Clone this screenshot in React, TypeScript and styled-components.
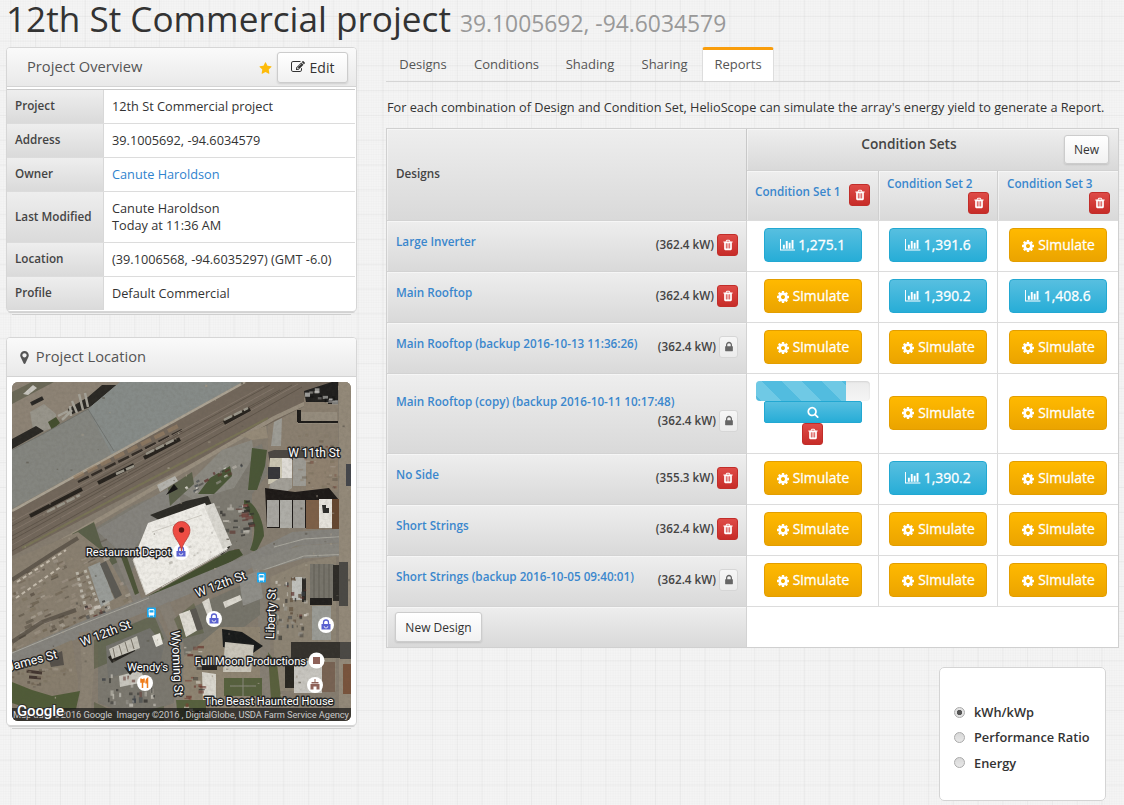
import React, { useState } from 'react';
import styled, { createGlobalStyle, css } from 'styled-components';

const GlobalStyle = createGlobalStyle`
  * { box-sizing: border-box; }
  body {
    margin: 0;
    height: 805px;
    overflow: hidden;
    color: #333;
    font-family: "Open Sans", "Liberation Sans", sans-serif;
    font-size: 13px;
    background-color: #f4f4f4;
    background-image:
      linear-gradient(to right, rgba(0,0,0,.035) 1px, transparent 1px),
      linear-gradient(to bottom, rgba(0,0,0,.035) 1px, transparent 1px),
      linear-gradient(to right, rgba(0,0,0,.01) 1px, transparent 1px),
      linear-gradient(to bottom, rgba(0,0,0,.01) 1px, transparent 1px);
    background-size: 24.8px 24.8px, 24.8px 24.8px, 2.48px 2.48px, 2.48px 2.48px;
    background-position: 10.4px 0, 0 15.8px, 10.4px 0, 0 15.8px;
  }
  button { font-family: inherit; cursor: pointer; }
`;

/* ---------- icons ---------- */

const ICONS = {
  chart: 'M640 768v512h-256v-512h256zm384-512v1024h-256v-1024h256zm1024 1152v128h-2048v-1536h128v1408h1920zm-640-896v768h-256v-768h256zm384-384v1152h-256v-1152h256z',
  cog: 'M1152 896q0-106-75-181t-181-75-181 75-75 181 75 181 181 75 181-75 75-181zm512-109v222q0 12-8 23t-20 13l-185 28q-19 54-39 91 35 50 107 138 10 12 10 25t-9 23q-27 37-99 108t-94 71q-12 0-26-9l-138-108q-44 23-91 38-16 136-29 186-7 28-36 28h-222q-14 0-24.500-8.500t-11.500-21.500l-28-184q-49-16-90-37l-141 107q-10 9-25 9-14 0-25-11-126-114-165-168-7-10-7-23 0-12 8-23 15-21 51-66.500t54-70.500q-27-50-41-99l-183-27q-13-2-21-12.500t-8-23.500v-222q0-12 8-23t19-13l186-28q14-46 39-92-40-57-107-138-10-12-10-24 0-10 9-23 26-36 98.500-107.500t94.500-71.500q13 0 26 10l138 107q44-23 91-38 16-136 29-186 7-28 36-28h222q14 0 24.500 8.500t11.500 21.500l28 184q49 16 90 37l142-107q9-9 24-9 13 0 25 10 129 119 165 170 7 8 7 22 0 12-8 23-15 21-51 66.500t-54 70.500q26 50 41 98l183 28q13 2 21 12.500t8 23.500z',
  edit: 'M888 1184l116-116-152-152-116 116v56h96v96h56zm440-720q-16-16-33 1l-350 350q-17 17-1 33t33-1l350-350q17-17 1-33zm80 594v190q0 119-84.500 203.500t-203.500 84.500h-832q-119 0-203.500-84.500t-84.500-203.500v-832q0-119 84.500-203.500t203.500-84.500h832q63 0 117 25 15 7 18 23 3 17-9 29l-49 49q-14 14-32 8-23-6-45-6h-832q-66 0-113 47t-47 113v832q0 66 47 113t113 47h832q66 0 113-47t47-113v-126q0-13 9-22l64-64q15-15 35-7t20 29zm-96-738l288 288-672 672h-288v-288zm444 132l-92 92-288-288 92-92q28-28 68-28t68 28l152 152q28 28 28 68t-28 68z',
  star: 'M1728 647q0 22-26 48l-363 354 86 500q1 7 1 20 0 21-10.500 35.500t-30.500 14.500q-19 0-40-12l-449-236-449 236q-22 12-40 12-21 0-31.500-14.500t-10.500-35.500q0-6 2-20l86-500-364-354q-25-27-25-48 0-37 56-46l502-73 225-455q19-41 49-41t49 41l225 455 502 73q56 9 56 46z',
  marker: 'M1152 640q0-106-75-181t-181-75-181 75-75 181 75 181 181 75 181-75 75-181zm256 0q0 109-33 179l-364 774q-16 33-47.500 52t-67.500 19-67.500-19-46.500-52l-365-774q-33-70-33-179 0-212 150-362t362-150 362 150 150 362z',
  trash: 'M704 1376v-704q0-14-9-23t-23-9h-64q-14 0-23 9t-9 23v704q0 14 9 23t23 9h64q14 0 23-9t9-23zm256 0v-704q0-14-9-23t-23-9h-64q-14 0-23 9t-9 23v704q0 14 9 23t23 9h64q14 0 23-9t9-23zm256 0v-704q0-14-9-23t-23-9h-64q-14 0-23 9t-9 23v704q0 14 9 23t23 9h64q14 0 23-9t9-23zm-544-992h448l-48-117q-7-9-17-11h-317q-10 2-17 11zm928 32v64q0 14-9 23t-23 9h-96v948q0 83-47 143.500t-113 60.500h-832q-66 0-113-58.500t-47-141.500v-952h-96q-14 0-23-9t-9-23v-64q0-14 9-23t23-9h309l70-167q15-37 54-63t79-26h320q40 0 79 26t54 63l70 167h309q14 0 23 9t9 23z',
  lock: 'M640 768h512v-192q0-106-75-181t-181-75-181 75-75 181v192zm832 96v576q0 40-28 68t-68 28h-960q-40 0-68-28t-28-68v-576q0-40 28-68t68-28h32v-192q0-184 132-316t316-132 316 132 132 316v192h32q40 0 68 28t28 68z',
  search: 'M1216 832q0-185-131.500-316.500t-316.500-131.500-316.500 131.500-131.500 316.500 131.500 316.500 316.500 131.500 316.500-131.500 131.500-316.500zm512 832q0 52-38 90t-90 38q-54 0-90-38l-343-342q-179 124-399 124-143 0-273.500-55.500t-225-150-150-225-55.500-273.500 55.500-273.500 150-225 225-150 273.500-55.500 273.500 55.500 225 150 150 225 55.500 273.500q0 220-124 399l343 343q37 37 37 90z',
};
type IconName = keyof typeof ICONS;

const Glyph = styled.svg<{ $size: number; $wide?: boolean }>`
  display: block;
  flex: none;
  height: ${p => p.$size}px;
  width: ${p => (p.$wide ? (p.$size * 2048) / 1792 : p.$size)}px;
  fill: currentColor;
`;
const Icon = ({ name, size }: { name: IconName; size: number }) => (
  <Glyph $size={size} $wide={name === 'chart'} viewBox={name === 'chart' ? '0 0 2048 1792' : '0 0 1792 1792'}>
    <path d={ICONS[name]} />
  </Glyph>
);

/* ---------- page frame ---------- */

const Page = styled.div`
  width: 1124px;
  height: 805px;
  overflow: hidden;
  padding-left: 6px;
`;
const Title = styled.h1`
  margin: 0;
  height: 47px;
  font-size: 35.15px;
  line-height: 36px;
  font-weight: 400;
  color: #333;
  white-space: nowrap;
`;
const Coordinates = styled.small`
  margin-left: 9px;
  font-size: 22.85px;
  color: #999;
`;
const Columns = styled.div`
  display: flex;
  gap: 29px;
  align-items: flex-start;
`;
const Sidebar = styled.aside`
  width: 351px;
  flex: none;
  display: flex;
  flex-direction: column;
  gap: 25px;
`;
const Main = styled.main`
  width: 734px;
  display: flex;
  flex-direction: column;
`;

/* ---------- buttons ---------- */

const LightButton = styled.button<{ $w: number; $h: number; $fs: number }>`
  display: flex;
  align-items: center;
  justify-content: center;
  gap: 5px;
  width: ${p => p.$w}px;
  height: ${p => p.$h}px;
  padding: 0;
  font-size: ${p => p.$fs}px;
  color: #333;
  border: 1px solid #ccc;
  border-radius: 3px;
  background: linear-gradient(#fff, #f1f1f1);
  box-shadow: 0 1px 2px rgba(0,0,0,.12);
`;
const DeleteButton = styled.button`
  display: flex;
  align-items: center;
  justify-content: center;
  flex: none;
  width: 21px;
  height: 22px;
  padding: 0;
  color: #fff;
  border: 1px solid #c12e2a;
  border-radius: 3px;
  background: linear-gradient(#de4b47, #c72c28);
`;
const LockButton = styled(DeleteButton)`
  width: 19px;
  color: #666;
  border-color: #d6d6d6;
  background: linear-gradient(#f6f6f6, #ebebeb);
`;
const ActionButton = styled.button<{ $kind: 'result' | 'simulate'; $slim?: boolean }>`
  display: flex;
  align-items: center;
  justify-content: center;
  gap: 3px;
  width: 98px;
  height: ${p => (p.$slim ? 22 : 34)}px;
  padding: 0 0 1px;
  color: #fff;
  font-size: 13.9px;
  -webkit-text-stroke: .3px #fff;
  border-radius: ${p => (p.$slim ? 2 : 4)}px;
  ${p => p.$kind === 'result'
    ? css`border: 1px solid #22a8d2; background: linear-gradient(#57bfe0, #27add7);`
    : css`border: 1px solid #e39e00; background: linear-gradient(#ffb900, #eba400);`}
  & > svg { margin-top: ${p => (p.$slim ? 1 : 2)}px; }
`;

/* ---------- sidebar ---------- */

const Panel = styled.section`
  border: 1px solid #d6d6d6;
  border-width: 1px 1.5px;
  border-radius: 4px;
  background: #fff;
  box-shadow: 0 3px 0 -2px #d2d2d2, 0 8px 0 -6px #efefef, 0 9px 0 -6px #cfcfcf;
`;
const PanelHeader = styled.header<{ $indent: number }>`
  display: flex;
  align-items: center;
  height: 39px;
  padding: 0 8px 0 ${p => p.$indent}px;
  border-bottom: 1px solid #d3d3d3;
  border-radius: 3px 3px 0 0;
  background: linear-gradient(#fafafa, #e9e9e9);
  color: #555;
  font-size: 14.7px;
`;
const HeaderTitle = styled.span`
  flex: 1;
  padding-bottom: 3px;
`;
const Favourite = styled.span`
  color: #fdbb0a;
  margin-right: 5px;
  padding-top: 2px;
`;
const Facts = styled.dl`
  margin: 2px 0 1px;
  border-top: 1px solid #c9c9c9;
  margin-right: 1px;
`;
const Fact = styled.div<{ $h: number }>`
  display: flex;
  height: ${p => p.$h}px;
  border-bottom: 1px solid #dcdcdc;
  &:last-child { border-bottom: 0; }
`;
const FactName = styled.dt`
  width: 97px;
  padding: 0 8px 3px;
  display: flex;
  align-items: center;
  font-size: 11.7px;
  font-weight: 600;
  color: #444;
  border-right: 1px solid #d8d8d8;
  background: linear-gradient(#eee, #dadada);
`;
const FactValue = styled.dd<{ $link?: boolean }>`
  margin: 0;
  padding-left: 8px;
  display: flex;
  align-items: center;
  white-space: pre-line;
  font-size: 12.72px;
  line-height: 17px;
  color: ${p => (p.$link ? '#2f83ce' : '#333')};
`;
const MapFrame = styled.div`
  padding: 5px 5px 4px 4.5px;
`;
const MapSvg = styled.svg`
  display: block;
  width: 339px;
  height: 339px;
  border-radius: 6px;
  font-family: Roboto, sans-serif;
`;

/* ---------- tabs ---------- */

const Tabs = styled.nav`
  display: flex;
  height: 35px;
  border-bottom: 1px solid #d5d5d5;
`;
const Tab = styled.a<{ $active?: boolean; $w: number }>`
  width: ${p => p.$w}px;
  height: 34px;
  display: flex;
  align-items: center;
  justify-content: center;
  font-size: 13px;
  color: #555;
  ${p => p.$active && css`
    padding-bottom: 3px;
    background: #fff;
    border: 1px solid #ddd;
    border-top: 3px solid #f99d0b;
    border-bottom: 0;
    border-radius: 3px 3px 0 0;
  `}
`;
const Intro = styled.p`
  margin: 0;
  height: 46px;
  padding: 16px 0 0 1px;
  font-size: 12.72px;
  line-height: 18px;
  white-space: nowrap;
`;

/* ---------- report matrix ---------- */

const Matrix = styled.div`
  width: 733px;
  height: 520px;
  display: grid;
  grid-template-columns: 360px 132px 119px 120px;
  grid-template-rows: 91px 51px 51px 51px 80px 51px 51px 51px 41px;
  border: 1px solid #d0d0d0;
  background: #fff;
`;
const shade = css`
  background: linear-gradient(#eee, #d9d9d9);
  box-shadow: inset 1px 1px 0 rgba(255,255,255,.45);
`;
const CornerCell = styled.div`
  ${shade}
  display: flex;
  align-items: center;
  padding: 0 9px 3px;
  font-size: 11.7px;
  font-weight: 600;
  color: #444;
  border-right: 1px solid #c8c8c8;
`;
const ConditionArea = styled.div`
  grid-column: 2 / 5;
  display: grid;
  grid-template-rows: 42px 49px;
`;
const ConditionTop = styled.div`
  ${shade}
  display: flex;
  padding: 6px 9px 0 7px;
  border-bottom: 1px solid #d2d2d2;
`;
const ConditionHeading = styled.span`
  flex: 1;
  text-align: center;
  font-size: 13.7px;
  line-height: 18px;
  font-weight: 600;
  color: #444;
`;
const ConditionRow = styled.div`
  display: grid;
  grid-template-columns: 132px 119px 120px;
`;
const ConditionCell = styled.div<{ $stacked?: boolean }>`
  ${shade}
  display: flex;
  flex-direction: ${p => (p.$stacked ? 'column' : 'row')};
  justify-content: space-between;
  align-items: ${p => (p.$stacked ? 'stretch' : 'center')};
  padding: ${p => (p.$stacked ? '4px 8px 6px 8px' : '0 8px 2px 8px')};
  border-right: 1px solid #cfcfcf;
  &:last-child { border-right: 0; padding: 4px 8px 6px 9px; }
  & > button { align-self: ${p => (p.$stacked ? 'flex-end' : 'center')}; }
`;
const Link = styled.a`
  color: #3a87cd;
  font-size: 11.7px;
  line-height: 16px;
  font-weight: 600;
  white-space: nowrap;
`;
const LiftedLink = styled(Link)`
  padding-bottom: 7px;
`;
const DesignCell = styled.div<{ $stacked?: boolean }>`
  ${shade}
  display: flex;
  flex-direction: ${p => (p.$stacked ? 'column' : 'row')};
  justify-content: ${p => (p.$stacked ? 'center' : 'space-between')};
  padding: ${p => (p.$stacked ? '0 8px 3px 9px' : '12px 8px 0 9px')};
  border-right: 1px solid #d3d3d3;
  border-top: 1px solid #d3d3d3;
`;
const Capacity = styled.div<{ $ownLine?: boolean }>`
  display: flex;
  align-items: center;
  align-self: ${p => (p.$ownLine ? 'flex-end' : 'flex-start')};
  gap: 3px;
  height: 22px;
  margin-top: 1px;
  font-size: 11.7px;
  font-weight: 600;
  color: #444;
`;
const CapacityText = styled.span`
  padding-bottom: 2px;
`;
const ResultCell = styled.div`
  display: flex;
  flex-direction: column;
  align-items: center;
  justify-content: center;
  padding-bottom: 2px;
  border-top: 1px solid #dcdcdc;
  border-right: 1.5px solid #dcdcdc;
  &:nth-child(4n + 2) { border-right: 0; }
`;
const ProgressTrack = styled.div`
  width: 114px;
  height: 20px;
  border-radius: 4px;
  overflow: hidden;
  background: linear-gradient(#ebebeb, #f5f5f5);
  box-shadow: inset 0 1px 2px rgba(0,0,0,.1);
`;
const ProgressFill = styled.div`
  width: 90px;
  height: 100%;
  background: linear-gradient(45deg, #6fc9e5 25%, #52bcdf 25%, #52bcdf 50%, #6fc9e5 50%, #6fc9e5 75%, #52bcdf 75%) 26px 0 / 40px 40px;
`;
const NewDesignCell = styled.div`
  ${shade}
  padding: 5px 8px;
  border-right: 1px solid #d3d3d3;
  border-top: 1px solid #d3d3d3;
`;
const FooterCell = styled.div`
  grid-column: 2 / 5;
  border-top: 1px solid #dcdcdc;
`;

/* ---------- metric chooser ---------- */

const Metrics = styled.fieldset`
  align-self: flex-end;
  display: flex;
  flex-direction: column;
  gap: 7.4px;
  width: 167px;
  height: 134px;
  margin: 19px 14px 0 0;
  padding: 35px 0 0 14px;
  border: 1.5px solid #d4d4d4;
  border-radius: 5px;
  background: #fff;
`;
const Metric = styled.label`
  display: flex;
  align-items: center;
  gap: 9px;
  height: 18px;
  font-size: 12.8px;
  font-weight: 600;
`;
const Radio = styled.input`
  appearance: none;
  width: 11px;
  height: 11px;
  margin: 0;
  border: 1px solid #aaa;
  border-radius: 50%;
  background: linear-gradient(#d8d8d8, #e8e8e8);
  &:checked { background: radial-gradient(circle, #555 0 2.3px, #e2e2e2 3px); }
`;

/* ---------- satellite map ---------- */

const makeRandom = (seed: number) => () => {
  seed = (seed * 16807) % 2147483647;
  return seed / 2147483647;
};
type SpecksProps = { seed: number; n: number; x: number; y: number; w: number; h: number; angle?: number; colors: string[]; size?: [number, number] };
const Specks = ({ seed, n, x, y, w, h, angle = 0, colors, size = [4, 2] }: SpecksProps) => {
  const r = makeRandom(seed);
  return (
    <g transform={`translate(${x} ${y}) rotate(${angle})`}>
      {Array.from({ length: n }, (_, i) => (
        <rect key={i} x={r() * w} y={r() * h} width={size[0] * (0.4 + r())} height={size[1] * (0.5 + r())} fill={colors[Math.floor(r() * colors.length)]} opacity={0.4 + r() * 0.4} />
      ))}
    </g>
  );
};
const CARS = ['#e0ddd4', '#2f2e2c', '#5b2f2a', '#9a978f', '#3b4046', '#c8c4ba'];
const DIRT = ['#8d8271', '#6b604f', '#a2978a', '#5a5145', '#7f7462'];

const Label = ({ x, y, size = 12, rotate = 0, anchor = 'middle', children }: { x: number; y: number; size?: number; rotate?: number; anchor?: 'middle' | 'start' | 'end'; children: string }) => (
  <text transform={`translate(${x} ${y}) rotate(${rotate})`} fontSize={size} textAnchor={anchor} fill="#fff" stroke="#262626" strokeWidth="2.8" strokeLinejoin="round" paintOrder="stroke">{children}</text>
);
const Disc = ({ x, y, children }: { x: number; y: number; children: React.ReactNode }) => (
  <g transform={`translate(${x} ${y})`}><circle r="8" fill="#fff" />{children}</g>
);
const Bag = () => (
  <g><path d="M-4.500 -1h9v5.500h-9z" fill="#5a61cf" /><path d="M-2.500 -1v-1.500a2.500 2.500 0 0 1 5 0v1.500" fill="none" stroke="#5a61cf" strokeWidth="1.300" /><path d="M-1.800 1.200a1.800 1.800 0 0 0 3.600 0" fill="none" stroke="#fff" strokeWidth=".8" /></g>
);
const Bus = ({ x, y }: { x: number; y: number }) => (
  <g transform={`translate(${x} ${y})`}>
    <rect x="-4.500" y="-5" width="9" height="10" rx="1" fill="#1ba8f0" />
    <rect x="-2.800" y="-3.500" width="5.600" height="6.500" rx="1.200" fill="#fff" />
    <rect x="-2" y="-2.300" width="4" height="2.300" fill="#1ba8f0" />
    <path d="M-2 3v1M2 3v1" stroke="#fff" />
  </g>
);

const SatelliteMap = () => (
  <MapSvg viewBox="0 0 339 339">
    <defs>
      <filter id="grain" x="0" y="0" width="100%" height="100%">
        <feTurbulence type="fractalNoise" baseFrequency=".3" numOctaves="3" seed="8" />
        <feColorMatrix values="0 0 0 0 .1  0 0 0 0 .09  0 0 0 0 .07  0 0 0 -2 1.200" />
      </filter>
    </defs>
    <rect width="339" height="339" fill="#857c6f" />

    {/* north-west yard and warehouse roof */}
    <path d="M0 0h110L0 66z" fill="#8d8375" />
    <path d="M0 10L20 0h22L0 22z" fill="#6a6857" />
    <path d="M18 30l14-8 12 10v12l-22 10z" fill="#97948a" />
    <path d="M36 40l8-5 4 6-8 7z" fill="#444e2f" />
    <path d="M0 57l24-13 8 5-32 18zM56 27l20-12 14-12h18l-30 22-20 8z" fill="#2a2824" />
    <path d="M46 34l10-5M50 38l10-10M59 34l-1-10M65 31l-5-12M71 28l-4-16M76 25l-3-14" stroke="#a5a298" strokeWidth="2.500" />
    <path d="M19 22l12-6" stroke="#292724" strokeWidth="4" />
    <path d="M11 12l10-9 4 3-9 7z" fill="#c8c6bf" />
    <path d="M0 68L31 52 76 27 108 0h123l-63 35L0 127z" fill="#84857f" />
    <path d="M76 27L108 0h123l-63 35-68 38z" fill="#868b88" />
    <path d="M76 27l26 42M0 68l31-16 45-25" stroke="#6c6f6a" strokeWidth=".8" fill="none" />

    {/* railway */}
    <path d="M0 128L231 0h108L256 43 100 122 0 174z" fill="#72675b" />
    <path d="M0 129L233 0" stroke="#aaa293" strokeWidth="2.500" />
    <path d="M62 96L168 43" stroke="#9a8064" strokeWidth="4" strokeDasharray="11 4" opacity=".6" />
    <path d="M66 100L170 48" stroke="#332d27" strokeWidth="2.500" strokeDasharray="12 3" />
    <g fill="none" strokeWidth="1">
      <path d="M0 140L252 4M0 149L262 6M0 163L286 2" stroke="#82766a" />
      <path d="M0 144L258 3M0 154L268 8M0 158L280 3M0 169L290 5" stroke="#5f554a" />
    </g>
    <path d="M18 134l52-27M86 101l36-18M132 76l36-19M212 41l26-14" stroke="#27231e" strokeWidth="4" />
    <path d="M35 130l33-17M104 92l20-9M134 72l30-15M212 38l24-12" stroke="#9a968a" strokeWidth="2.500" strokeDasharray="9 2" />
    <path d="M18 177L121 118 262 36 339 0" stroke="#988e7e" strokeWidth="4" fill="none" />
    <path d="M10 166L120 107 256 36" stroke="#7d7b53" strokeWidth="2" fill="none" opacity=".6" />

    {/* lots around the depot */}
    <path d="M60 160l60-36 60-26 30-20 40-16 6 30-16 20v60l-30 14-20-46-60 22-14 40-20 10z" fill="#7d7a71" />
    <path d="M84 148l76-44 8 12 2 16-35 16-20 28z" fill="#85837d" />
    <path d="M168 110l42-42 30-10 2 16-20 32-40 12z" fill="#8b8981" />
    <path d="M186 112l12-16 20-12 2 10-18 18zM240 66l15 2-2 16-8 24-9 0zM232 118c10 0 20 20 20 36l-8 16-6-2c8-20 4-36-6-42z" fill="#4a5637" />
    <path d="M156 106l24-16 2 12-24 22zM60 152l22-12 8 24 20 14-16 8-20-14z" fill="#5a5f49" />
    <path d="M162 102l-8 11 12-6z" fill="#171615" />
    <path d="M145 103l18-9 3 5-18 11z" fill="#b4b3ad" />
    <Specks seed={31} n={24} x={204} y={120} w={30} h={54} colors={CARS} size={[5, 2.500]} />
    <Specks seed={7} n={16} x={224} y={118} w={10} h={38} angle={-8} colors={['#6d3833', '#ece8df', '#2a2927', '#59342f']} size={[6, 2.500]} />
    <Specks seed={77} n={26} x={172} y={104} w={60} h={12} angle={-28} colors={CARS} size={[4, 2]} />
    <path d="M138 133l36-14 22-5 22 51-8 8z" fill="#2c2b26" />
    <path d="M136 141l57-20 23 46-82 46-13-35z" fill="#eeece6" />
    <path d="M192 124l10-3 18 42-9 4z" fill="#d9d7d0" />
    <path d="M150 205l65-37M134 213l-13-35M140 150l50-17" stroke="#cfccc4" strokeWidth="1" />
    <Specks seed={5} n={14} x={138} y={158} w={66} h={34} angle={-18} colors={['#bbb8b0', '#fff', '#b4b1aa']} size={[3, 2]} />
    <path d="M129 218l88-49 10-2 4 6-50 28-48 24z" fill="#434e30" />

    {/* scrap yards to the west */}
    <path d="M0 178l66-28 28 22 30 54-46 20L0 282z" fill="#897f70" />
    <Specks seed={44} n={200} x={-30} y={210} w={130} h={74} angle={-24} colors={[...DIRT, '#aaa295', '#968b7c']} size={[6, 2.200]} />
    <path d="M0 198L40 172 66 156M0 260l30-20 34-12" stroke="#38312a" strokeWidth="4" fill="none" opacity=".5" />
    <path d="M5 200L54 168M4 216L50 184" stroke="#c5bcad" strokeWidth="2" strokeDasharray="4 3" />
    <path d="M76 185l12-5 14 37-13 8z" fill="#999c98" />
    <path d="M88 182l6-3 16 34-7 4z" fill="#5c5a54" />
    <path d="M65 190l9 38M73 188l12 32" stroke="#b9b4a8" strokeWidth="3" strokeDasharray="3 3" />
    <Specks seed={97} n={18} x={70} y={224} w={24} h={14} angle={-20} colors={CARS} size={[5, 4]} />
    <path d="M101 170l8-4 22 54-8 4z" fill="#858078" />
    <path d="M108 172l5-3 14 42-4 2z" fill="#4d5439" />

    {/* 12th Street and crossings */}
    <path d="M0 278L70 247 140 220 232 182 282 157 339 153" fill="none" stroke="#85837d" strokeWidth="14" />
    <path d="M240 185L290 170 339 167" fill="none" stroke="#88867f" strokeWidth="13" />
    <path d="M0 271l68-28 69-27M262 165l30-8 47-3M240 192l52-18 47-2" fill="none" stroke="#a9a79e" strokeWidth="1" />
    <path d="M73 250L76 285 72 339" fill="none" stroke="#8b8273" strokeWidth="12" />
    <path d="M152 222l9 20 6 34v63" fill="none" stroke="#867f74" strokeWidth="12" />
    <path d="M249 188l3 45 1 106" fill="none" stroke="#867f74" strokeWidth="12" />
    <path d="M333 0v339" stroke="#938979" strokeWidth="12" />

    {/* block between 12th Street and Wyoming */}
    <path d="M86 255l58-23 16 34 2 55-38 14-38-14z" fill="#7b786f" />
    <path d="M82 258l60-25 10 24-70 30zM82 320l30 14 40-10v15H82z" fill="#5d6149" opacity=".7" />
    <path d="M94 264l44-18 14 18-4 18-52 14z" fill="#74736d" />
    <path d="M96 275l27-15v9l-23 12z" fill="#25231f" />
    <path d="M97 267l28-13 3 12-28 11z" fill="#c8c5bb" />
    <path d="M101 266l2 10M107 263l3 10M113 260l3 10M119 257l3 10" stroke="#777267" />
    <path d="M140 254l8-3 3 11-7 3z" fill="#e9e7df" />
    <path d="M107 294l22-6 4 12-25 5z" fill="#c7c5bd" />
    <path d="M112 285l12 2-6 6z" fill="#25241f" />
    <Specks seed={9} n={32} x={90} y={290} w={60} h={34} colors={CARS} size={[3, 4]} />

    {/* south-west corner */}
    <path d="M0 284l60-26 6 40-2 41H0z" fill="#877d6d" />
    <path d="M0 300l20 8 20 6 28-5-4 18-34 4-30-10z" fill="#505b38" />
    <path d="M36 275l14-6 2 14-13 2z" fill="#55504a" />
    <path d="M14 289l16 2M17 295l12 1" stroke="#433630" strokeWidth="3" />
    <Specks seed={12} n={30} x={0} y={285} w={60} h={16} colors={DIRT} size={[5, 2]} />

    {/* south centre */}
    <path d="M170 230l58-26 20-6v35l-34 26-42 14z" fill="#76746a" />
    <path d="M162 237l20-16 10 30-22 6z" fill="#5b6045" opacity=".6" />
    <path d="M190 220l7-4 4 16-5 3zM211 220l17-7 2 5-17 8z" fill="#dbd8cf" />
    <path d="M227 197l20-9 4 28-20 8z" fill="#8f8e88" />
    <path d="M167 232l11-4 8 20-12 7z" fill="#dedbd2" />
    <path d="M178 228l6-2 7 21-6 2z" fill="#5a5751" />
    <path d="M172 275l36-30h40v90h-78z" fill="#8e8472" />
    <path d="M210 247l20 3 21 14-10 7-30-6z" fill="#191b1b" />
    <path d="M213 260l29 3-3 27h-28z" fill="#c9c5b9" />
    <path d="M190 290l14 2v30h-13z" fill="#d9d6cd" />
    <path d="M190 283h15v5h-15z" fill="#24211e" />
    <path d="M212 296h38v18h-38zM164 318h30v21h-28z" fill="#57613e" />
    <path d="M218 304h26M231 296v18" stroke="#8b8a7c" strokeWidth="1" />
    <Specks seed={22} n={32} x={172} y={262} w={16} h={70} colors={['#632f27', '#2d2c2a', '#c9c3b6', '#7a3d32']} size={[5, 2.500]} />

    {/* north-east blocks */}
    <path d="M256 43L292 25v-9L326 0v110h-70z" fill="#8a7f70" />
    <path d="M292 9L320 0h6v22h-10v-2h-22z" fill="#201f1e" />
    <path d="M286 30h39v12h-39z" fill="#958c7d" />
    <path d="M285 28h4v12h-4zM286 39h40v2h-40z" fill="#1d1b19" />
    <path d="M262 40l8-4-1 28h-10z" fill="#9d9c95" />
    <path d="M228 53l26-9 2 12-16 2z" fill="#958a78" />
    <path d="M256 70l6-2h30v10h-24l-10 4z" fill="#4b4742" />
    <path d="M258 76h12v26h-14z" fill="#cbc6b2" /><path d="M270 76h10v26h-10z" fill="#dedbd5" /><path d="M281 76h13v28h-13z" fill="#9d9b94" />
    <path d="M256 85h12v12h-12z" fill="#37373a" /><path d="M268 96h12v10l-6 4h-18l2-8z" fill="#a29f97" />
    <path d="M294 76h32v32h-32z" fill="#8f816f" />
    <Specks seed={66} n={48} x={286} y={46} w={38} h={60} colors={[...DIRT, '#775245']} size={[4, 2]} />
    <path d="M253 106l30 4 34-4 10 12-2 28h-70z" fill="#1e1a18" />
    <path d="M255 118h12v27h-12z" fill="#a7a5a0" /><path d="M268 118h12v28h-12z" fill="#aeada7" /><path d="M281 118h12v28h-12z" fill="#9e9c96" />
    <path d="M294 118h13v29h-13z" fill="#7d6048" /><path d="M307 117h13v29h-13z" fill="#e6e3dc" /><path d="M320 117h7v30h-7z" fill="#654730" />
    <path d="M310 123h4v3h3v5h-6z" fill="#2d2c2a" />
    <Specks seed={63} n={15} x={293} y={6} w={28} h={16} colors={['#aaa9a6', '#cccbc8', '#111']} size={[5, 3]} />
    <path d="M334 82h5v22h-5z" fill="#44464b" />

    {/* south-east blocks */}
    <path d="M258 195l36-15 30-6v135h-60z" fill="#8d8474" />
    <path d="M298 182h24v34h-24z" fill="#77746b" /><path d="M321 183h6v36h-6z" fill="#2e2c28" />
    <path d="M302 182v34M307 182v34M312 182v34M317 182v34" stroke="#635f56" />
    <path d="M280 195h10v23h-10z" fill="#bfc0bb" /><path d="M290 196h4v24h-4z" fill="#2c2a26" />
    <path d="M300 224h19v34h-19z" fill="#9a9b95" /><path d="M298 216h22v7h-22z" fill="#211f1d" />
    <path d="M279 260h58v16h-58z" fill="#35322d" /><path d="M273 276h12v30h-12z" fill="#292721" />
    <path d="M282 279h28v32h-28z" fill="#c7c5bf" />
    <path d="M310 280h13v30h-13z" fill="#786353" />
    <path d="M327 180h9v44h-9zM328 260h11v17h-11z" fill="#4b4945" />
    <path d="M331 282h8v30h-8z" fill="#79543d" />
    <path d="M256 270l9 12 4 34-10 2z" fill="#59603d" />
    <Specks seed={4} n={50} x={262} y={194} w={32} h={60} colors={[...CARS, '#5b4937']} size={[3, 3]} />

    <Specks seed={52} n={100} x={0} y={0} w={339} h={339} colors={['#5d594f', '#a39a89']} size={[2, 1.500]} />
    <rect width="339" height="339" filter="url(#grain)" opacity=".13" />

    <rect y="326" width="339" height="13" fill="#111" opacity=".68" />
    <text x="337" y="336" fontSize="9.300" fill="#c9c9c9" textAnchor="end" textLength="336" xmlSpace="preserve">Map data ©2016 Google&#160; Imagery ©2016 , DigitalGlobe, USDA Farm Service Agency</text>

    <Label x={302} y={75} size={12}>W 11th St</Label>
    <Label x={210} y={206} size={12.300} rotate={-21}>W 12th St</Label>
    <Label x={95} y={255} size={12.300} rotate={-21}>W 12th St</Label>
    <Label x={46} y={276} size={12.300} rotate={-15} anchor="end">James St</Label>
    <Label x={263} y={232} size={12} rotate={-88}>Liberty St</Label>
    <Label x={161} y={281.500} size={12.300} rotate={87}>Wyoming St</Label>
    <Label x={159} y={174} size={11} anchor="end">Restaurant Depot</Label>
    <Label x={135.500} y={289} size={11.300}>Wendy's</Label>
    <Label x={294} y={283} size={11.100} anchor="end">Full Moon Productions</Label>
    <Label x={257} y={323} size={11.100}>The Beast Haunted House</Label>

    <Disc x={169} y={170}><Bag /></Disc>
    <Disc x={202} y={237}><Bag /></Disc>
    <Disc x={314} y={243}><Bag /></Disc>
    <Disc x={133} y={301}>
      <path d="M-2.500 5V-4M-4 -4.500v3.500h3v-3.500M2.500 5V-4.500q-1.500 1-1.500 5" fill="none" stroke="#ef7d1a" strokeWidth="1.500" />
    </Disc>
    <Disc x={304.500} y={278.500}><rect x="-3.500" y="-3.500" width="7" height="7" fill="#8e6259" /></Disc>
    <Disc x={303} y={303}>
      <path d="M-4.500 4.500V-1h9v5.500h-3V1.500h-3v3zM-3.500 -3h7v1.500h-7zM-.5 -6h1v3h-1z" fill="#8e6259" />
    </Disc>
    <Bus x={139.500} y={230.500} />
    <Bus x={249.500} y={195.500} />

    <path d="M169.500 169c-.8-9-8.500-13-8.500-21a8.500 8.500 0 0 1 17 0c0 8-7.700 12-8.500 21z" fill="#ee4c43" stroke="#b83a35" strokeWidth=".8" />
    <circle cx="169.500" cy="148" r="2.700" fill="#5c1411" />

    <text x="5" y="334" fontSize="15" fontWeight="500" fill="#fff" stroke="#333" strokeWidth="2" paintOrder="stroke" textLength="47">Google</text>
  </MapSvg>
);

/* ---------- data ---------- */

const facts = [
  { name: 'Project', value: '12th St Commercial project', h: 34 },
  { name: 'Address', value: '39.1005692, -94.6034579', h: 34 },
  { name: 'Owner', value: 'Canute Haroldson', h: 34, link: true },
  { name: 'Last Modified', value: 'Canute Haroldson\nToday at 11:36 AM', h: 51 },
  { name: 'Location', value: '(39.1006568, -94.6035297) (GMT -6.0)', h: 34 },
  { name: 'Profile', value: 'Default Commercial', h: 33 },
];

const tabs: [string, number][] = [['Designs', 74], ['Conditions', 93], ['Shading', 74], ['Sharing', 75], ['Reports', 72]];

type Design = { name: string; kw: string; locked?: boolean; stacked?: boolean; cells: string[] };
const designs: Design[] = [
  { name: 'Large Inverter', kw: '362.4', cells: ['1,275.1', '1,391.6', ''] },
  { name: 'Main Rooftop', kw: '362.4', cells: ['', '1,390.2', '1,408.6'] },
  { name: 'Main Rooftop (backup 2016-10-13 11:36:26)', kw: '362.4', locked: true, cells: ['', '', ''] },
  { name: 'Main Rooftop (copy) (backup 2016-10-11 10:17:48)', kw: '362.4', locked: true, stacked: true, cells: ['running', '', ''] },
  { name: 'No Side', kw: '355.3', cells: ['', '1,390.2', ''] },
  { name: 'Short Strings', kw: '362.4', cells: ['', '', ''] },
  { name: 'Short Strings (backup 2016-10-05 09:40:01)', kw: '362.4', locked: true, cells: ['', '', ''] },
];

const Delete = () => <DeleteButton><Icon name="trash" size={12} /></DeleteButton>;

const Result = ({ value }: { value: string }) => {
  if (value === 'running') {
    return (
      <ResultCell>
        <ProgressTrack><ProgressFill /></ProgressTrack>
        <ActionButton $kind="result" $slim><Icon name="search" size={12} /></ActionButton>
        <Delete />
      </ResultCell>
    );
  }
  return (
    <ResultCell>
      <ActionButton $kind={value ? 'result' : 'simulate'}>
        <Icon name={value ? 'chart' : 'cog'} size={value ? 13.5 : 14} />
        {value || 'Simulate'}
      </ActionButton>
    </ResultCell>
  );
};

export default function App() {
  const [metric, setMetric] = useState('kWh/kWp');
  return (
    <Page>
      <GlobalStyle />
      <Title>12th St Commercial project<Coordinates>39.1005692, -94.6034579</Coordinates></Title>
      <Columns>
        <Sidebar>
          <Panel>
            <PanelHeader $indent={20}>
              <HeaderTitle>Project Overview</HeaderTitle>
              <Favourite><Icon name="star" size={13} /></Favourite>
              <LightButton $w={71} $h={31} $fs={14}><Icon name="edit" size={14} />Edit</LightButton>
            </PanelHeader>
            <Facts>
              {facts.map(f => (
                <Fact key={f.name} $h={f.h}>
                  <FactName>{f.name}</FactName>
                  <FactValue $link={f.link}>{f.value}</FactValue>
                </Fact>
              ))}
            </Facts>
          </Panel>
          <Panel>
            <PanelHeader $indent={10}>
              <Icon name="marker" size={15} />
              <HeaderTitle>&nbsp;Project Location</HeaderTitle>
            </PanelHeader>
            <MapFrame><SatelliteMap /></MapFrame>
          </Panel>
        </Sidebar>
        <Main>
          <Tabs>
            {tabs.map(([label, w]) => <Tab key={label} $w={w} $active={label === 'Reports'}>{label}</Tab>)}
          </Tabs>
          <Intro>For each combination of Design and Condition Set, HelioScope can simulate the array's energy yield to generate a Report.</Intro>
          <Matrix>
            <CornerCell>Designs</CornerCell>
            <ConditionArea>
              <ConditionTop>
                <ConditionHeading>Condition Sets</ConditionHeading>
                <LightButton $w={45} $h={29} $fs={12}>New</LightButton>
              </ConditionTop>
              <ConditionRow>
                {[1, 2, 3].map(n => (
                  <ConditionCell key={n} $stacked={n > 1}>
                    {n === 1 ? <LiftedLink>Condition Set 1</LiftedLink> : <Link>Condition Set {n}</Link>}
                    <Delete />
                  </ConditionCell>
                ))}
              </ConditionRow>
            </ConditionArea>
            {designs.map(d => (
              <React.Fragment key={d.name}>
                <DesignCell $stacked={d.stacked}>
                  <Link>{d.name}</Link>
                  <Capacity $ownLine={d.stacked}>
                    <CapacityText>({d.kw} kW)</CapacityText>
                    {d.locked ? <LockButton><Icon name="lock" size={12} /></LockButton> : <Delete />}
                  </Capacity>
                </DesignCell>
                {d.cells.map((c, i) => <Result key={i} value={c} />)}
              </React.Fragment>
            ))}
            <NewDesignCell><LightButton $w={87} $h={30} $fs={12}>New Design</LightButton></NewDesignCell>
            <FooterCell />
          </Matrix>
          <Metrics>
            {['kWh/kWp', 'Performance Ratio', 'Energy'].map(m => (
              <Metric key={m}>
                <Radio type="radio" name="metric" checked={metric === m} onChange={() => setMetric(m)} />
                {m}
              </Metric>
            ))}
          </Metrics>
        </Main>
      </Columns>
    </Page>
  );
}
